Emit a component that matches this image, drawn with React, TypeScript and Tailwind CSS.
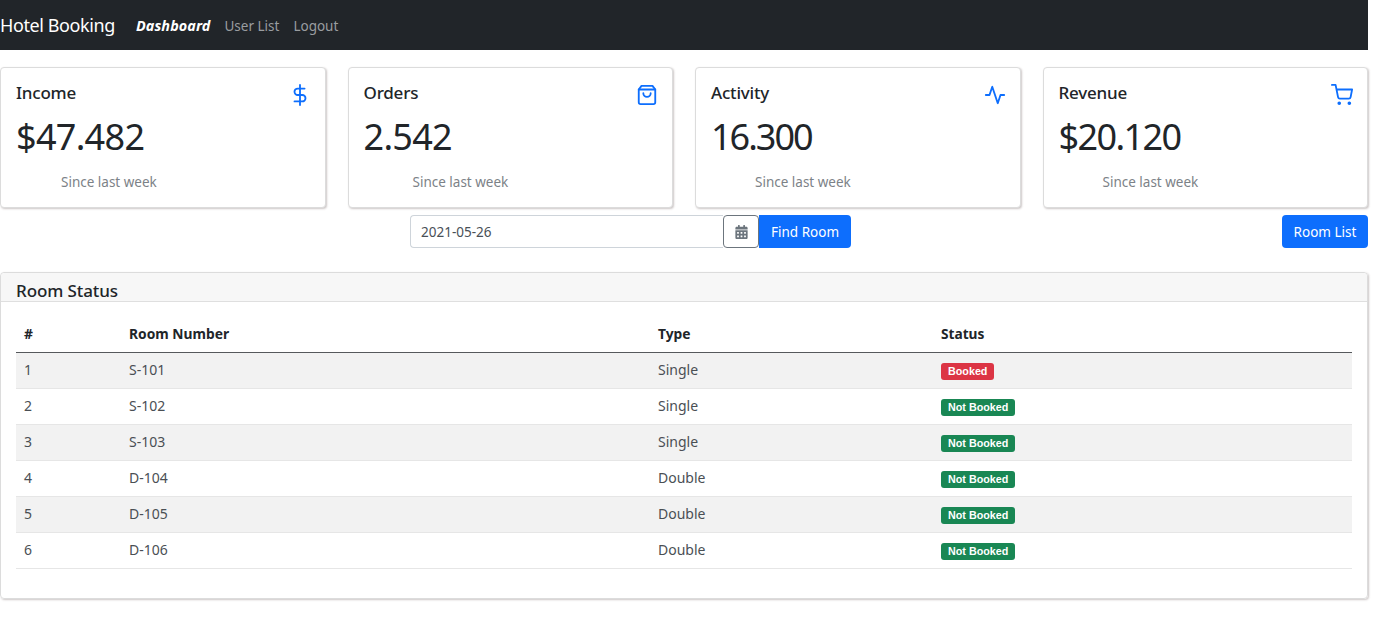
import React from 'react';

const stats = [
  { title: 'Income', value: '$47.482', icon: 'dollar', indent: 'pl-[45px]', spacing: 'tracking-[-0.7px]' },
  { title: 'Orders', value: '2.542', icon: 'bag', indent: 'pl-[49px]', spacing: 'tracking-[-0.7px]' },
  { title: 'Activity', value: '16.300', icon: 'activity', indent: 'pl-[44px]', spacing: 'tracking-[-2px]' },
  { title: 'Revenue', value: '$20.120', icon: 'cart', indent: 'pl-[44px]', spacing: 'tracking-[-1.6px]' },
];

const rooms = [
  { id: 1, number: 'S-101', type: 'Single', booked: true },
  { id: 2, number: 'S-102', type: 'Single', booked: false },
  { id: 3, number: 'S-103', type: 'Single', booked: false },
  { id: 4, number: 'D-104', type: 'Double', booked: false },
  { id: 5, number: 'D-105', type: 'Double', booked: false },
  { id: 6, number: 'D-106', type: 'Double', booked: false },
];

const StatIcon = ({ name }: { name: string }) => (
  <svg className="w-[22px] h-[22px] text-[#0d6efd]" fill="none" viewBox="0 0 24 24" stroke="currentColor" strokeWidth={2} strokeLinecap="round" strokeLinejoin="round">
    {name === 'dollar' && (
      <>
        <line x1="12" y1="1" x2="12" y2="23" />
        <path d="M17 5H9.5a3.5 3.5 0 0 0 0 7h5a3.5 3.5 0 0 1 0 7H6" />
      </>
    )}
    {name === 'bag' && (
      <>
        <path d="M6 2L3 6v14a2 2 0 0 0 2 2h14a2 2 0 0 0 2-2V6l-3-4z" />
        <line x1="3" y1="6" x2="21" y2="6" />
        <path d="M16 10a4 4 0 0 1-8 0" />
      </>
    )}
    {name === 'activity' && <polyline points="22 12 18 12 15 21 9 3 6 12 2 12" />}
    {name === 'cart' && (
      <>
        <circle cx="9" cy="21" r="1" />
        <circle cx="20" cy="21" r="1" />
        <path d="M1 1h4l2.68 13.39a2 2 0 0 0 2 1.61h9.72a2 2 0 0 0 2-1.61L23 6H6" />
      </>
    )}
  </svg>
);

export default function App() {
  return (
    <div className="w-[1368px] h-[624px] bg-white text-[#212529] font-['Noto_Sans',sans-serif] text-[14px]">
      {/* Navbar */}
      <nav className="h-[50px] bg-[#212529] flex items-center">
        <span className="text-[18px] text-white tracking-[-0.4px]">Hotel Booking</span>
        <div className="flex items-center gap-[14px] ml-[21px] mt-[2px] text-[13.5px] text-[#9a9da0]">
          <span className="text-white font-bold italic text-[14.4px] tracking-[0.1px]">Dashboard</span>
          <span>User List</span>
          <span>Logout</span>
        </div>
      </nav>

      {/* Stat cards */}
      <div className="grid grid-cols-4 gap-[22px] mt-[17px]">
        {stats.map((s) => (
          <div key={s.title} className="h-[141px] bg-white border border-[#dcdcdc] rounded-[4px] shadow-[1px_1px_2px_rgba(90,70,70,0.3)] px-[15px] pt-[13px]">
            <div className="flex justify-between">
              <span className="text-[17px] font-medium leading-[24px] tracking-[-0.2px]">{s.title}</span>
              <span className="mt-[3px] -mr-px"><StatIcon name={s.icon} /></span>
            </div>
            <div className={`text-[36px] leading-[42px] mt-[10px] ${s.spacing}`}>{s.value}</div>
            <div className={`text-[13.5px] text-[#7c8287] leading-[20px] mt-[14px] ${s.indent}`}>Since last week</div>
          </div>
        ))}
      </div>

      {/* Date search */}
      <div className="flex justify-between mt-[7px] h-[33px] pl-[410px]">
        <div className="flex">
          <div className="w-[313px] border border-[#ced4da] border-r-0 rounded-l-[4px] flex items-center pl-[10px] pt-px text-[#495057] text-[13.5px]">2021-05-26</div>
          <button className="w-[36px] border border-[#6c757d] rounded-[4px] flex items-center justify-center bg-white">
            <svg className="w-[13px] h-[14px] text-[#6c757d]" viewBox="0 0 448 512" fill="currentColor">
              <path d="M0 464c0 26.5 21.5 48 48 48h352c26.5 0 48-21.5 48-48V192H0v272zm320-196c0-6.600 5.400-12 12-12h40c6.600 0 12 5.400 12 12v40c0 6.600-5.400 12-12 12h-40c-6.600 0-12-5.400-12-12v-40zm0 128c0-6.600 5.400-12 12-12h40c6.600 0 12 5.400 12 12v40c0 6.600-5.400 12-12 12h-40c-6.600 0-12-5.400-12-12v-40zM192 268c0-6.600 5.400-12 12-12h40c6.600 0 12 5.400 12 12v40c0 6.600-5.400 12-12 12h-40c-6.600 0-12-5.400-12-12v-40zm0 128c0-6.600 5.400-12 12-12h40c6.600 0 12 5.400 12 12v40c0 6.600-5.400 12-12 12h-40c-6.600 0-12-5.400-12-12v-40zM64 268c0-6.600 5.400-12 12-12h40c6.600 0 12 5.400 12 12v40c0 6.600-5.400 12-12 12H76c-6.600 0-12-5.400-12-12v-40zm0 128c0-6.600 5.400-12 12-12h40c6.600 0 12 5.400 12 12v40c0 6.600-5.400 12-12 12H76c-6.600 0-12-5.400-12-12v-40zM400 64h-48V16c0-8.800-7.200-16-16-16h-32c-8.800 0-16 7.200-16 16v48H160V16c0-8.800-7.200-16-16-16h-32c-8.800 0-16 7.200-16 16v48H48C21.500 64 0 85.500 0 112v48h448v-48c0-26.500-21.500-48-48-48z" />
            </svg>
          </button>
          <button className="w-[92px] bg-[#0d6efd] text-white rounded-r-[4px] pt-px text-[13.5px]">Find Room</button>
        </div>
        <button className="w-[86px] bg-[#0d6efd] text-white rounded-[4px] pt-px text-[13.5px]">Room List</button>
      </div>

      {/* Room status */}
      <div className="mt-[24px] h-[327px] border border-[#dcdcdc] rounded-[4px] shadow-[1px_1px_2px_rgba(90,70,70,0.3)]">
        <div className="h-[29px] bg-[#f7f7f7] border-b border-[#dfdfdf] pl-[15px] text-[17px] font-medium leading-[35px] tracking-[-0.1px] overflow-hidden rounded-t-[4px]">Room Status</div>
        <div className="px-[15px] pt-[15px]">
          <table className="w-[1336px] table-fixed border-collapse text-[14px] text-[#4a4f54]">
            <thead>
              <tr className="h-[35px] border-b border-[#56595c] text-[#212529]">
                <th className="w-[105px] pl-[8px] pt-px text-left font-bold text-[13.8px]">#</th>
                <th className="w-[529px] pl-[8px] pt-px text-left font-bold text-[13.8px]">Room Number</th>
                <th className="w-[283px] pl-[8px] pt-px text-left font-bold text-[13.8px]">Type</th>
                <th className="pl-[8px] pt-px text-left font-bold text-[13.7px]">Status</th>
              </tr>
            </thead>
            <tbody>
              {rooms.map((r) => (
                <tr key={r.id} className={`h-[36px] border-b border-[#e6e6e6] ${r.id % 2 === 1 ? 'bg-[#f2f2f2]' : 'bg-white'}`}>
                  <td className="pl-[8px] pb-px">{r.id}</td>
                  <td className="pl-[8px] pb-px">{r.number}</td>
                  <td className="pl-[8px] pb-px">{r.type}</td>
                  <td className="pl-[8px]">
                    <span className={`inline-block align-middle h-[17px] px-[7px] rounded-[3px] text-white font-bold text-[10.75px] leading-[17px] font-['Liberation_Sans',sans-serif] ${r.booked ? 'bg-[#dc3545]' : 'bg-[#198754]'}`}>
                      {r.booked ? 'Booked' : 'Not Booked'}
                    </span>
                  </td>
                </tr>
              ))}
            </tbody>
          </table>
        </div>
      </div>
    </div>
  );
}
